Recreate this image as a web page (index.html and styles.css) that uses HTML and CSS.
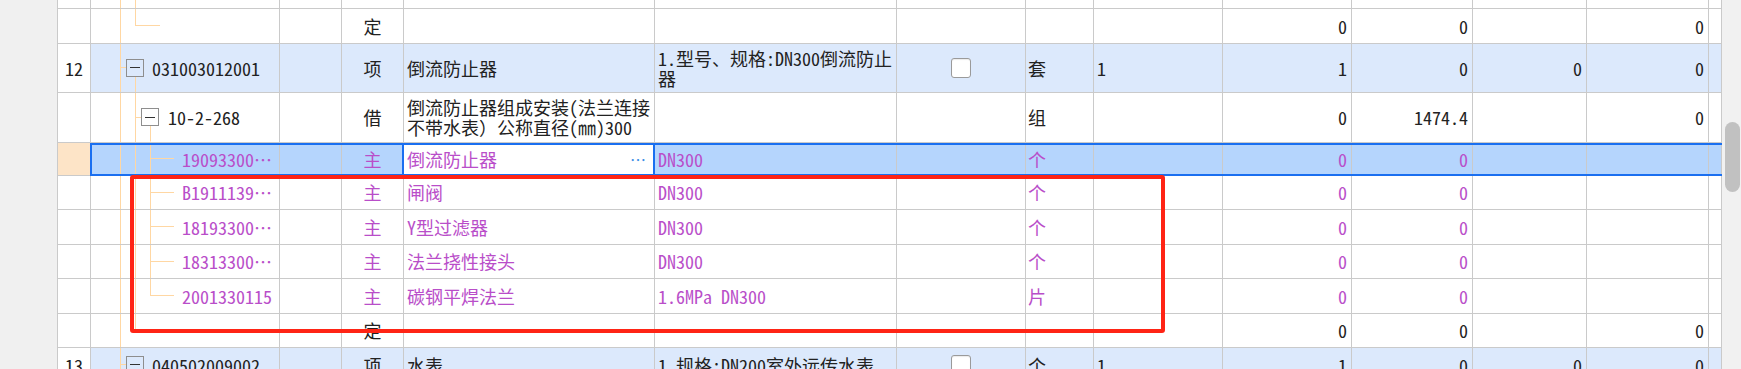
FILE: index.html
```html
<!DOCTYPE html>
<html lang="zh-CN">
<head>
<meta charset="utf-8">
<title>清单</title>
<link rel="stylesheet" href="styles.css">
</head>
<body>
<div class="app">
  <div class="side"></div>
  <div class="grid">
    <div class="row cut">
      <div class="c num"></div><div class="c code t-pass"></div><div class="c"></div><div class="c type"></div><div class="c name"></div><div class="c spec"></div><div class="c chk"></div><div class="c unit"></div><div class="c expr"></div><div class="c r"></div><div class="c r"></div><div class="c r"></div><div class="c r"></div><div class="c"></div>
    </div>
    <div class="row">
      <div class="c num"></div><div class="c code t-end"></div><div class="c"></div><div class="c type">定</div><div class="c name"></div><div class="c spec"></div><div class="c chk"></div><div class="c unit"></div><div class="c expr"></div><div class="c r">0</div><div class="c r">0</div><div class="c r"></div><div class="c r">0</div><div class="c"></div>
    </div>
    <div class="row tall item">
      <div class="c num">12</div><div class="c code t-item"><span class="tg"></span><span>031003012001</span></div><div class="c"></div><div class="c type">项</div><div class="c name">倒流防止器</div><div class="c spec wrap">1.型号、规格:DN300倒流防止器</div><div class="c chk"><span class="cb"></span></div><div class="c unit">套</div><div class="c expr">1</div><div class="c r">1</div><div class="c r">0</div><div class="c r">0</div><div class="c r">0</div><div class="c"></div>
    </div>
    <div class="row tall">
      <div class="c num"></div><div class="c code t-sub"><span class="tg"></span><span>10-2-268</span></div><div class="c"></div><div class="c type">借</div><div class="c name wrap">倒流防止器组成安装(法兰连接不带水表）公称直径(㎜)300</div><div class="c spec"></div><div class="c chk"></div><div class="c unit">组</div><div class="c expr"></div><div class="c r">0</div><div class="c r">1474.4</div><div class="c r"></div><div class="c r">0</div><div class="c"></div>
    </div>
    <div class="row sel mat">
      <div class="c num"></div><div class="c code t-leaf">19093300⋯</div><div class="c"></div><div class="c type">主</div><div class="c name active"><span>倒流防止器</span><span class="more">⋯</span></div><div class="c spec">DN300</div><div class="c chk"></div><div class="c unit">个</div><div class="c expr"></div><div class="c r">0</div><div class="c r">0</div><div class="c r"></div><div class="c r"></div><div class="c"></div>
    </div>
    <div class="row mat">
      <div class="c num"></div><div class="c code t-leaf">B1911139⋯</div><div class="c"></div><div class="c type">主</div><div class="c name">闸阀</div><div class="c spec">DN300</div><div class="c chk"></div><div class="c unit">个</div><div class="c expr"></div><div class="c r">0</div><div class="c r">0</div><div class="c r"></div><div class="c r"></div><div class="c"></div>
    </div>
    <div class="row mat">
      <div class="c num"></div><div class="c code t-leaf">18193300⋯</div><div class="c"></div><div class="c type">主</div><div class="c name">Y型过滤器</div><div class="c spec">DN300</div><div class="c chk"></div><div class="c unit">个</div><div class="c expr"></div><div class="c r">0</div><div class="c r">0</div><div class="c r"></div><div class="c r"></div><div class="c"></div>
    </div>
    <div class="row mat">
      <div class="c num"></div><div class="c code t-leaf">18313300⋯</div><div class="c"></div><div class="c type">主</div><div class="c name">法兰挠性接头</div><div class="c spec">DN300</div><div class="c chk"></div><div class="c unit">个</div><div class="c expr"></div><div class="c r">0</div><div class="c r">0</div><div class="c r"></div><div class="c r"></div><div class="c"></div>
    </div>
    <div class="row mat">
      <div class="c num"></div><div class="c code t-last">2001330115</div><div class="c"></div><div class="c type">主</div><div class="c name">碳钢平焊法兰</div><div class="c spec">1.6MPa DN300</div><div class="c chk"></div><div class="c unit">片</div><div class="c expr"></div><div class="c r">0</div><div class="c r">0</div><div class="c r"></div><div class="c r"></div><div class="c"></div>
    </div>
    <div class="row">
      <div class="c num"></div><div class="c code t-end"></div><div class="c"></div><div class="c type">定</div><div class="c name"></div><div class="c spec"></div><div class="c chk"></div><div class="c unit"></div><div class="c expr"></div><div class="c r">0</div><div class="c r">0</div><div class="c r"></div><div class="c r">0</div><div class="c"></div>
    </div>
    <div class="row item">
      <div class="c num">13</div><div class="c code t-item"><span class="tg"></span><span>040502009002</span></div><div class="c"></div><div class="c type">项</div><div class="c name">水表</div><div class="c spec">1.规格:DN200室外远传水表</div><div class="c chk"><span class="cb"></span></div><div class="c unit">个</div><div class="c expr">1</div><div class="c r">1</div><div class="c r">0</div><div class="c r">0</div><div class="c r">0</div><div class="c"></div>
    </div>
    <div class="mark"></div>
  </div>
  <div class="vscroll"><div class="thumb"></div></div>
</div>
</body>
</html>
```

FILE: styles.css
```css
* { box-sizing: border-box; }
html, body { margin: 0; height: 100%; overflow: hidden; }
body {
  font-family: "Noto Sans Mono CJK SC", "Noto Sans CJK SC", "Liberation Sans", sans-serif;
  font-size: 18px;
  color: #222;
  background: #fff;
}
:root {
  --line: #cacaca;
  --tl: #ffd7a3;
  --purple: #b94ec9;
  --blue: #1a6ff0;
}
.app { display: flex; height: 369px; }
.side { flex: none; width: 57px; background: #f0f0f0; }
.grid {
  flex: 1;
  position: relative;
  overflow: hidden;
  border-left: 1px solid var(--line);
}
.vscroll { flex: none; width: 19px; background: #f1f1f1; padding: 122px 1px 0 3px; }
.thumb { height: 70px; background: #c1c1c1; border-radius: 8px; }

.row {
  display: grid;
  grid-template-columns: 33px 189px 62px 62px 251px 242px 129px 68px 129px 129px 121px 114px 122px 1fr;
  height: 34.5px;
  border-bottom: 1px solid var(--line);
  position: relative;
}
.row.cut { height: 9px; }
.row.tall { height: 49.5px; }
.row.sel { height: 33px; }
.row.item { background-color: #dce9fc; }
.row.item .num { background-color: #fff; }

.c {
  border-right: 1px solid var(--line);
  display: flex;
  align-items: center;
  line-height: 20px;
  padding: 0 4px;
  white-space: nowrap;
  overflow: hidden;
  min-width: 0;
}
.c.wrap { white-space: normal; }
.num { justify-content: center; padding: 0; }
.type { justify-content: center; padding: 0; }
.chk { justify-content: center; }
.name { padding: 0 2px 0 3px; }
.spec { padding: 0 0 0 3px; }
.unit { padding-left: 2px; }
.expr { padding-left: 3px; }
.r { justify-content: flex-end; padding-right: 4px; }

.cb {
  width: 20px;
  height: 20px;
  border: 1px solid #9a9a9a;
  border-radius: 3px;
  background: #fff;
  box-shadow: inset 0 1px 1px rgba(0, 0, 0, 0.08);
}

/* tree guides */
.code { padding: 0; gap: 8px; background-repeat: no-repeat; }
.t-pass {
  background-image: linear-gradient(var(--tl), var(--tl)), linear-gradient(var(--tl), var(--tl));
  background-size: 1px 100%, 1px 100%;
  background-position: 29px 0, 44px 0;
}
.t-end {
  background-image: linear-gradient(var(--tl), var(--tl)), linear-gradient(var(--tl), var(--tl)), linear-gradient(var(--tl), var(--tl));
  background-size: 1px 100%, 1px 50%, 25px 1px;
  background-position: 29px 0, 44px 0, 44px 50%;
}
.t-item {
  padding-left: 35px;
  background-image: linear-gradient(var(--tl), var(--tl)), linear-gradient(var(--tl), var(--tl)), linear-gradient(var(--tl), var(--tl));
  background-size: 1px 100%, 6px 1px, 1px 50%;
  background-position: 29px 0, 29px 50%, 44px 100%;
}
.t-sub {
  padding-left: 50px;
  gap: 9px;
  background-image: linear-gradient(var(--tl), var(--tl)), linear-gradient(var(--tl), var(--tl)), linear-gradient(var(--tl), var(--tl)), linear-gradient(var(--tl), var(--tl));
  background-size: 1px 100%, 1px 100%, 6px 1px, 1px 50%;
  background-position: 29px 0, 44px 0, 44px 50%, 59px 100%;
}
.t-leaf, .t-last {
  padding-left: 91px;
  background-image: linear-gradient(var(--tl), var(--tl)), linear-gradient(var(--tl), var(--tl)), linear-gradient(var(--tl), var(--tl)), linear-gradient(var(--tl), var(--tl));
  background-size: 1px 100%, 1px 100%, 1px 100%, 24px 1px;
  background-position: 29px 0, 44px 0, 59px 0, 59px 50%;
}
.t-last { background-size: 1px 100%, 1px 100%, 1px 50%, 24px 1px; }

.tg {
  flex: none;
  width: 18px;
  height: 18px;
  border: 1px solid #8e8e8e;
  background-color: #fff;
  display: flex;
  align-items: center;
  justify-content: center;
}
.item .tg { background-color: #dce9fc; }
.tg::before { content: ""; width: 10px; height: 1px; background: #333; }

/* material rows */
.mat .c { color: var(--purple); }

/* selected row */
.row.sel { background-color: #b5d5fd; }
.sel .num { background-color: #fde4c7; }
.sel::after {
  content: "";
  position: absolute;
  left: 32px;
  right: 0;
  top: 0;
  bottom: -1px;
  border: 2px solid var(--blue);
  border-right: none;
  pointer-events: none;
}
.sel .c.active {
  background-color: #fff;
  justify-content: space-between;
  position: relative;
  overflow: visible;
}
.active::before {
  content: "";
  position: absolute;
  top: 0;
  bottom: 0;
  left: -2px;
  right: -1px;
  border-left: 2px solid var(--blue);
  border-right: 2px solid var(--blue);
}
.more { color: #3c8ee6; font-size: 16px; margin-right: 6px; }

/* highlight frame drawn over the grid */
.mark {
  position: absolute;
  left: 72px;
  top: 175px;
  width: 1035px;
  height: 158px;
  border: 4px solid #ff2415;
  border-radius: 3px;
  pointer-events: none;
}
```
